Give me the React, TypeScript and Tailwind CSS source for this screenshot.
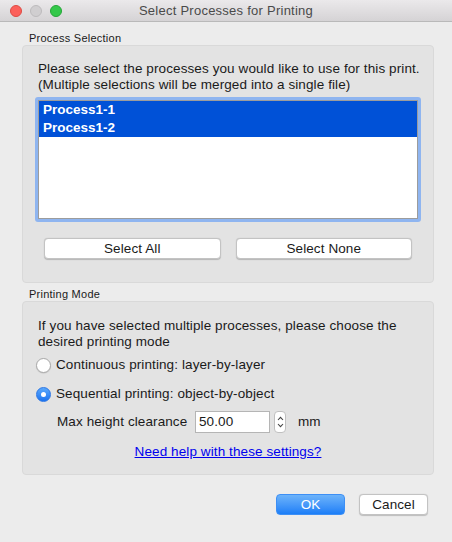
import React from "react";

const font = { fontFamily: '"Liberation Sans", Arial, sans-serif' };

const Radio = ({ checked }: { checked?: boolean }) =>
    checked ? (
        <span className="w-[15px] h-[15px] rounded-full bg-gradient-to-b from-[#5aa8fb] to-[#1a73f0] border border-[#2b76e6] flex items-center justify-center shrink-0">
            <span className="w-[5px] h-[5px] rounded-full bg-white" />
        </span>
    ) : (
        <span className="w-[15px] h-[15px] rounded-full bg-white border border-[#a9a9a9] shadow-[0_0.5px_1px_rgba(0,0,0,0.15)] shrink-0" />
    );

const App = () => {
    return (
        <div className="w-[452px] h-[542px] bg-[#ececec] text-[13.5px] tracking-[0.1px] leading-[20px] text-[#1a1a1a] overflow-hidden flex flex-col" style={font}>
            {/* Title bar */}
            <div className="h-[22px] shrink-0 relative flex items-center justify-center bg-gradient-to-b from-[#ebe9eb] to-[#d5d3d5] border-b border-[#b9b9b9]">
                <div className="absolute left-[10px] top-[5px] flex gap-[8px]">
                    <span className="w-[12px] h-[12px] rounded-full bg-[#fc605b] border border-[#de4a43]" />
                    <span className="w-[12px] h-[12px] rounded-full bg-[#d0ced0] border border-[#bdbbbd]" />
                    <span className="w-[12px] h-[12px] rounded-full bg-[#34c84a] border border-[#24a637]" />
                </div>
                <span className="text-[13px] tracking-[0.25px] text-[#4a4a4a]">Select Processes for Printing</span>
            </div>

            <div className="flex flex-col px-[22px] pr-[18px]">
                {/* Process Selection */}
                <div className="text-[11px] tracking-[0.25px] pl-[7px] pt-[10px] leading-[13px]">Process Selection</div>
                <div className="bg-[#e3e3e3] border border-[#d9d9d9] rounded-[4px] px-[13px] pt-[15px] pb-[23px]">
                    <p className="leading-[16px] pl-[2px]">
                        Please select the processes you would like to use for this print.<br />
                        (Multiple selections will be merged into a single file)
                    </p>
                    <div className="mt-[4px] rounded-[3px] border-[3px] border-[#8fb5f0] bg-white h-[125px] mx-[-1px]">
                        <div className="border border-[#9c9c9c] h-full bg-white">
                            <div className="bg-[#0051d7] text-white font-bold tracking-normal leading-[18px] px-[4px]">Process1-1</div>
                            <div className="bg-[#0051d7] text-white font-bold tracking-normal leading-[18px] px-[4px]">Process1-2</div>
                        </div>
                    </div>
                    <div className="mt-[16px] flex gap-[15px] px-[8px]">
                        <button className="flex-1 h-[21px] bg-white rounded-[4px] border border-[#c3c3c3] shadow-[0_0.5px_1px_rgba(0,0,0,0.2)] leading-[19px]">Select All</button>
                        <button className="flex-1 h-[21px] bg-white rounded-[4px] border border-[#c3c3c3] shadow-[0_0.5px_1px_rgba(0,0,0,0.2)] leading-[19px]">Select None</button>
                    </div>
                </div>

                {/* Printing Mode */}
                <div className="text-[11px] tracking-[0.25px] pl-[7px] pt-[5px] leading-[13px]">Printing Mode</div>
                <div className="bg-[#e3e3e3] border border-[#d9d9d9] rounded-[4px] px-[13px] pt-[16px] pb-[12px]">
                    <p className="leading-[16px] pl-[2px]">
                        If you have selected multiple processes, please choose the<br />
                        desired printing mode
                    </p>
                    <div className="mt-[5px] h-[20px] flex items-center gap-[5px]">
                        <Radio />
                        <span>Continuous printing: layer-by-layer</span>
                    </div>
                    <div className="mt-[9px] h-[20px] flex items-center gap-[5px]">
                        <Radio checked />
                        <span>Sequential printing: object-by-object</span>
                    </div>
                    <div className="mt-[7px] flex items-center pl-[21px]">
                        <span className="w-[138px]">Max height clearance</span>
                        <div className="w-[75px] h-[22px] bg-white border border-[#b5b5b5] px-[3px] leading-[20px]">50.00</div>
                        <div className="ml-[4px] w-[12px] h-[22px] bg-white border border-[#c0c0c0] rounded-[4px] flex flex-col items-center justify-center gap-[2px]">
                            <svg width="7" height="5" viewBox="0 0 7 5"><path d="M1 4 L3.5 1.3 L6 4" fill="none" stroke="#444" strokeWidth="1.1" /></svg>
                            <svg width="7" height="5" viewBox="0 0 7 5"><path d="M1 1 L3.5 3.7 L6 1" fill="none" stroke="#444" strokeWidth="1.1" /></svg>
                        </div>
                        <span className="ml-[12px]">mm</span>
                    </div>
                    <div className="mt-[9px] text-center">
                        <a className="text-[#0000ee] underline">Need help with these settings?</a>
                    </div>
                </div>

                {/* Footer buttons */}
                <div className="mt-[19px] flex justify-end gap-[14px] pr-[6px]">
                    <button className="w-[69px] h-[21px] rounded-[4px] bg-gradient-to-b from-[#6cb3fa] to-[#1a7ef7] border border-[#3d8ff5] text-white leading-[19px]">OK</button>
                    <button className="w-[69px] h-[21px] rounded-[4px] bg-white border border-[#c3c3c3] shadow-[0_0.5px_1px_rgba(0,0,0,0.2)] leading-[19px]">Cancel</button>
                </div>
            </div>
        </div>
    );
};

export default App;
